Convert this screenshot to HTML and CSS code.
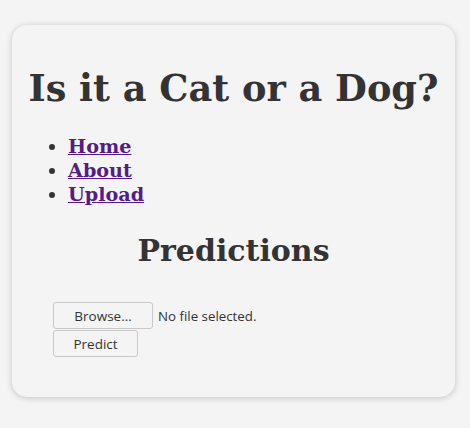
FILE: index.html
```html
<!DOCTYPE html>
<html>
<head>
<meta charset="utf-8">
<link rel="stylesheet" href="styles.css">
</head>
<body>
<div class="card">
  <h1 class="title">Is it a Cat or a Dog?</h1>
  <ul class="nav">
    <li><a href="#">Home</a></li>
    <li><a href="#">About</a></li>
    <li><a href="#">Upload</a></li>
  </ul>
  <h2 class="sub">Predictions</h2>
  <form class="form">
    <div class="file-row">
      <button type="button" class="btn browse">Browse…</button>
      <span class="file-label">No file selected.</span>
    </div>
    <button type="button" class="btn predict">Predict</button>
  </form>
</div>
</body>
</html>
```
FILE: styles.css
```css
html, body {
  margin: 0;
  background: #f4f4f4;
}
body {
  padding: 25px 15px 30px 12px;
  font-family: "DejaVu Serif", serif;
  color: #333;
}
.card {
  background: #f4f4f4;
  border-radius: 15px;
  box-shadow: 0 1px 6px rgba(0, 0, 0, 0.2);
  padding: 24px 16px 40px 16px;
  height: 372px;
  box-sizing: border-box;
}
.title {
  margin: 18px 0 0 0;
  font-size: 36.7px;
  font-weight: bold;
  text-align: center;
  line-height: 43px;
  white-space: nowrap;
}
.nav {
  margin: 25px 0 0 0;
  padding-left: 40px;
  font-size: 19.2px;
  line-height: 24px;
  font-weight: bold;
}
.nav a {
  color: #551a8b;
}
.sub {
  margin: 26px 0 0 0;
  font-size: 30px;
  line-height: 35px;
  text-align: center;
  font-weight: bold;
}
.form {
  margin: 34px 0 0 25px;
  font-family: "Open Sans", "DejaVu Sans", sans-serif;
  font-size: 13.3px;
}
.file-row {
  display: flex;
  align-items: center;
  gap: 5px;
}
.btn {
  font-family: "Open Sans", "DejaVu Sans", sans-serif;
  font-size: 13.5px;
  color: #333;
  background: #f4f4f4;
  border: 1px solid #c8c8c8;
  border-radius: 3px;
  height: 27px;
  padding: 0;
  display: block;
}
.browse {
  width: 100px;
}
.predict {
  width: 85px;
  margin-top: 1px;
}
.file-label {
  color: #333;
}
```
